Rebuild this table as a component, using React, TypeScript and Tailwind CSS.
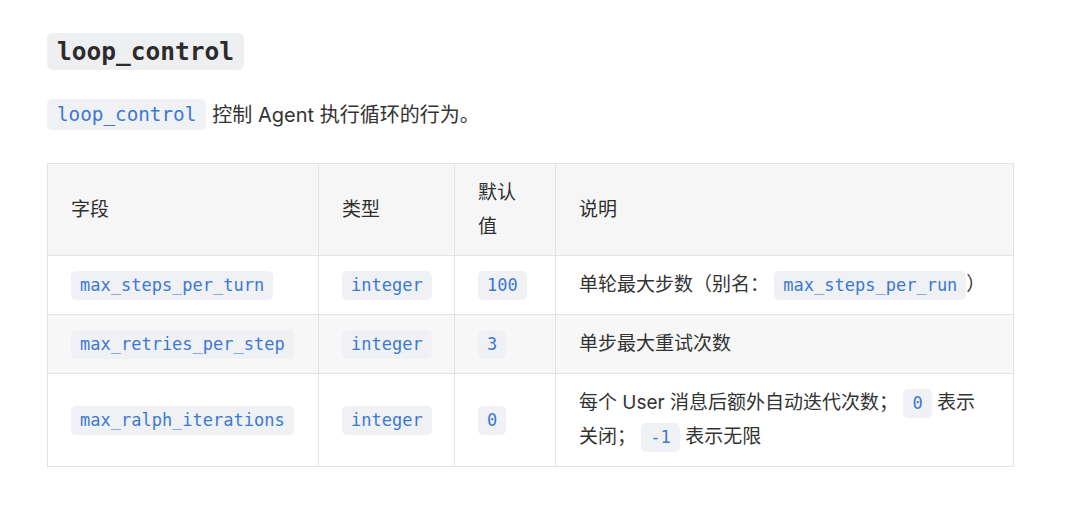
import type { ReactNode } from "react";

const sans = "font-['Inter','Noto_Sans_CJK_SC',sans-serif]";

function Code({ children }: { children: ReactNode }) {
  return (
    <code className="inline-block rounded-[5px] bg-[#eff1f4] px-[9px] align-baseline font-['DejaVu_Sans_Mono',monospace] text-[17px] leading-[29px] text-[#3d79d3]">
      {children}
    </code>
  );
}

type Row = { field: string; type: string; def: string; desc: ReactNode };

const rows: Row[] = [
  {
    field: "max_steps_per_turn",
    type: "integer",
    def: "100",
    desc: (
      <>
        单轮最大步数（别名： <Code>max_steps_per_run</Code>）
      </>
    ),
  },
  { field: "max_retries_per_step", type: "integer", def: "3", desc: "单步最大重试次数" },
  {
    field: "max_ralph_iterations",
    type: "integer",
    def: "0",
    desc: (
      <>
        每个 User 消息后额外自动迭代次数； <Code>0</Code> 表示关闭； <Code>-1</Code> 表示无限
      </>
    ),
  },
];

const cell = "border border-[#e3e3e3] px-[23px] text-left align-middle";

export default function App() {
  return (
    <main className={`min-h-screen bg-white pl-[47px] pt-[33px] text-[#333] ${sans}`}>
      <h3>
        <code className="inline-block rounded-[6px] bg-[#eeeff1] px-[10px] font-['DejaVu_Sans_Mono',monospace] text-[24.5px] font-bold leading-[37px] text-[#2b2b2b]">
          loop_control
        </code>
      </h3>

      <p className="mt-[29px] flex h-[31px] items-center gap-[6px] text-[20px]">
        <code className="inline-block rounded-[5px] bg-[#eff1f4] px-[10px] font-['DejaVu_Sans_Mono',monospace] text-[19.3px] leading-[31px] text-[#3d79d3]">
          loop_control
        </code>
        <span>控制 Agent 执行循环的行为。</span>
      </p>

      <table className="mt-[33px] w-[967px] table-fixed border-collapse border border-[#e3e3e3] text-[19px] leading-[34px] text-[#333]">
        <colgroup>
          <col className="w-[271px]" />
          <col className="w-[136px]" />
          <col className="w-[101px]" />
          <col />
        </colgroup>
        <thead>
          <tr className="bg-[#f6f6f6]">
            <th className={`${cell} py-[11.5px] font-normal text-[#2e2e2e]`}>字段</th>
            <th className={`${cell} py-[11.5px] font-normal text-[#2e2e2e]`}>类型</th>
            <th className={`${cell} py-[11.5px] font-normal text-[#2e2e2e]`}>默认值</th>
            <th className={`${cell} py-[11.5px] font-normal text-[#2e2e2e]`}>说明</th>
          </tr>
        </thead>
        <tbody>
          {rows.map((row, i) => (
            <tr key={row.field} className={i === 1 ? "bg-[#f7f7f7]" : "bg-white"}>
              <td className={`${cell} py-3`}>
                <Code>{row.field}</Code>
              </td>
              <td className={`${cell} py-3`}>
                <Code>{row.type}</Code>
              </td>
              <td className={`${cell} py-3`}>
                <Code>{row.def}</Code>
              </td>
              <td className={`${cell} py-3`}>{row.desc}</td>
            </tr>
          ))}
        </tbody>
      </table>
    </main>
  );
}
